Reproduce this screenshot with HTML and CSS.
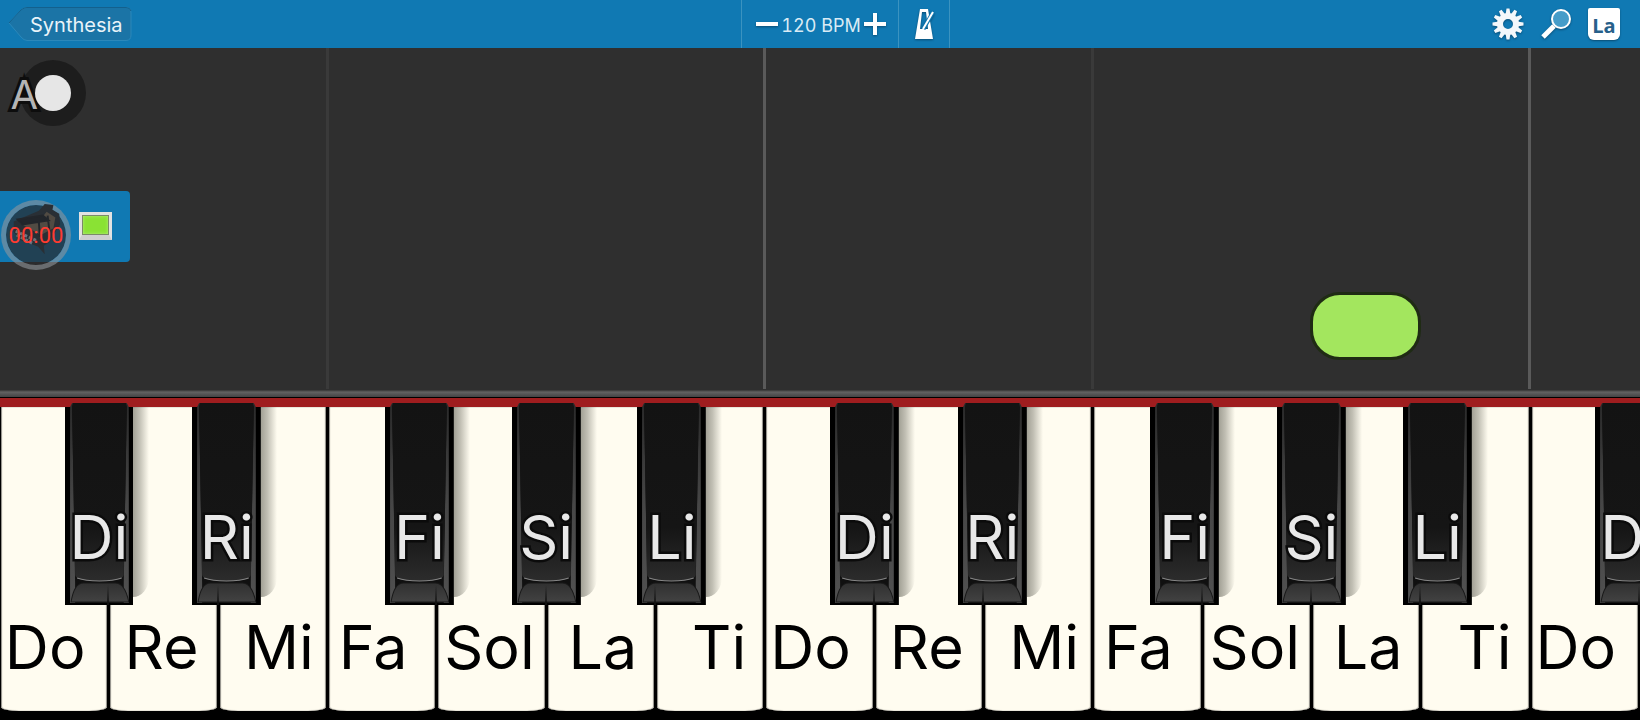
FILE: index.html
```html
<!DOCTYPE html>
<html lang="en">
<head>
  <meta charset="UTF-8">
  <meta name="viewport" content="width=device-width, initial-scale=1.0">
  <title>Synthesia</title>
  <link rel="stylesheet" href="styles.css">
</head>
<body>
  <header class="toolbar">
    <div class="toolbar-left">
      <button class="back">
        <svg class="back-shape" viewBox="0 0 124 34" aria-hidden="true">
          <path d="M1 16 L13 3 Q16 .5 19 .5 H118 Q123 .5 123 6 V28 Q123 33.500 118 33.500 H19 Q16 33.500 13 30 Z" fill="#1b74a6" stroke="#2b88ba"/>
          <path d="M1 16 L13 3 Q16 .5 19 .5 H118 Q122 .5 123 4" fill="none" stroke="#13608d"/>
        </svg>
        <span>Synthesia</span>
      </button>
    </div>
    <div class="tempo">
      <button class="step" aria-label="Slower">
        <svg width="22" height="22" viewBox="0 0 22 22"><path d="M0 11h22" stroke="#fff" stroke-width="4"/></svg>
      </button>
      <span class="bpm">120 BPM</span>
      <button class="step" aria-label="Faster">
        <svg width="22" height="22" viewBox="0 0 22 22"><path d="M0 11h22M11 0v22" stroke="#fff" stroke-width="4"/></svg>
      </button>
    </div>
    <div class="toolbar-right">
      <button class="metronome" aria-label="Metronome">
        <svg width="20" height="32" viewBox="0 0 20 32">
          <path fill="#fff" fill-rule="evenodd" d="M6 1h8l5 30H1zM8 4L6 21h8L12 4z"/>
          <path d="M9.500 21L19 4" stroke="#1078b2" stroke-width="4"/>
          <path d="M9 21L19 4" stroke="#fff" stroke-width="2"/>
        </svg>
      </button>
      <div class="tools">
        <button aria-label="Settings">
          <svg width="32" height="32" viewBox="-16 -16 32 32">
            <g id="teeth" fill="#f4f8fb"></g>
            <circle r="8" fill="none" stroke="#f4f8fb" stroke-width="6"/>
          </svg>
        </button>
        <button aria-label="Zoom">
          <svg width="32" height="32" viewBox="0 0 32 32">
            <path d="M3 29L14 18" stroke="#fff" stroke-width="5"/>
            <circle cx="21" cy="11" r="9" fill="#459cc9" stroke="#fff" stroke-width="2"/>
          </svg>
        </button>
        <button class="names" aria-label="Note names">La</button>
      </div>
    </div>
  </header>

  <main class="lanes">
    <div class="lane low"></div>
    <div class="lane low-octave"></div>
    <div class="lane high"></div>
    <div class="lane high-octave"></div>
    <div class="note"></div>

    <div class="touch"><span class="touch-letter">A</span><span class="touch-dot"></span></div>

    <div class="part">
      <button class="recorder">
        <svg class="piano" viewBox="0 0 62 62" aria-hidden="true">
          <path d="M8 17L34 6 40 -1 49 0 48 5 55 9 56 20 44 39 39 42 40 51 33 43 14 36 8 28z" fill="#292f35"/>
          <path d="M13 18L34 17 42 7 51 13 49 24 36 31z" fill="#514b43"/>
          <path d="M12 15L38 11 44 16 17 20zM34 18L35 33M43 11L45 28" fill="#22262b" stroke="#22262b" stroke-width="2"/>
          <path d="M10 27L32 37M11 31L28 40" stroke="#6b747d" stroke-width="3" stroke-dasharray="3 2"/>
        </svg>
        <span>00:00</span>
      </button>
      <button class="swatch" aria-label="Part colour"></button>
    </div>
  </main>

  <div class="rail"></div>
  <div class="felt"></div>
  <div class="keyboard" id="keyboard"></div>

  <script>
    const octave = [
      { name: "Do", align: "far-left", black: "Di" },
      { name: "Re", align: "left", black: "Ri" },
      { name: "Mi", align: "right" },
      { name: "Fa", align: "far-left", black: "Fi" },
      { name: "Sol", align: "left", black: "Si" },
      { name: "La", align: "near-right", black: "Li" },
      { name: "Ti", align: "far-right" }
    ];

    // black key: bevelled sides, top face and the sloped front
    const blackArt = `
      <svg class="black-art" viewBox="0 0 68 202" preserveAspectRatio="none" aria-hidden="true">
        <defs>
          <linearGradient id="side" x2="0" y2="1">
            <stop offset="0" stop-color="#2a2a2a"/><stop offset=".5" stop-color="#464646"/><stop offset="1" stop-color="#505050"/>
          </linearGradient>
          <linearGradient id="face" x2="0" y2="1">
            <stop offset="0" stop-color="#131313"/><stop offset=".7" stop-color="#151515"/><stop offset="1" stop-color="#2c2c2c"/>
          </linearGradient>
          <linearGradient id="front" x2="0" y2="1">
            <stop offset="0" stop-color="#303030"/><stop offset="1" stop-color="#424242"/>
          </linearGradient>
        </defs>
        <path d="M0 4H68V202H0z" fill="#000"/>
        <path d="M7 0H61L63 4V200H5V4z" fill="url(#side)"/>
        <path d="M8 0H60L61 4 58 180V200H10V180L7 4z" fill="#101010"/>
        <path d="M8 0H60L61 4 58 172Q57 178 34 178T10 172L7 4z" fill="url(#face)"/>
        <path d="M12 175Q20 178 34 178T56 175" fill="none" stroke="#858585"/>
        <path d="M6 199Q9 180 18 180H50Q59 180 63 199z" fill="url(#front)" stroke="#181818"/>
      </svg>`;

    const keyboard = document.getElementById("keyboard");
    for (let i = 0; i < 15; i++) {
      const note = octave[i % 7];
      const key = document.createElement("div");
      key.className = "key";
      key.innerHTML = `<button class="white ${note.align}">${note.name}</button>`;
      if (note.black) {
        key.classList.add("split");
        key.innerHTML += `<button class="black ${note.black.toLowerCase()}">${blackArt}<span>${note.black}</span></button>`;
      }
      keyboard.appendChild(key);
    }

    let teeth = "";
    for (let a = 0; a < 360; a += 30) {
      teeth += `<path d="M-2.500 -9L-1.500 -15.500H1.500L2.500 -9z" transform="rotate(${a})"/>`;
    }
    document.getElementById("teeth").innerHTML = teeth;
  </script>
</body>
</html>
```
FILE: styles.css
```css
* {
  box-sizing: border-box;
}
body {
  margin: 0;
  min-height: 100vh;
  display: flex;
  flex-direction: column;
  overflow: hidden;
  background: #000;
  font-family: Inter, "Liberation Sans", sans-serif;
}
button {
  margin: 0;
  padding: 0;
  border: none;
  background: none;
  color: inherit;
  font: inherit;
  cursor: pointer;
}
svg {
  display: block;
}

/* toolbar */
.toolbar {
  display: grid;
  grid-template-columns: 1fr auto 1fr;
  height: 48px;
  background: #1079b3;
  color: #fff;
}
.toolbar-left {
  display: flex;
  align-items: center;
  padding-left: 8px;
}
.back {
  position: relative;
  width: 124px;
  height: 34px;
  padding: 2px 0 0 22px;
  text-align: left;
  font-size: 20px;
  color: #e9f3f9;
}
.back-shape {
  position: absolute;
  inset: 0;
}
.back span {
  position: relative;
}
.tempo {
  display: flex;
  align-items: center;
  justify-content: space-between;
  width: 158px;
  padding: 0 12px 0 14px;
  border-left: 1px solid #3b93c0;
  border-right: 1px solid #3b93c0;
}
.step svg,
.metronome svg,
.tools svg {
  filter: drop-shadow(0 1px 1px #0a4c73);
}
.bpm {
  font-size: 18px;
  line-height: 24px;
  padding-top: 4px;
  color: #d9ebf5;
  font-variant-numeric: tabular-nums;
  white-space: nowrap;
}
.toolbar-right {
  display: flex;
  justify-content: space-between;
}
.metronome {
  display: flex;
  align-items: center;
  justify-content: center;
  width: 51px;
  border-right: 1px solid #3b93c0;
}
.tools {
  display: flex;
  align-items: center;
  gap: 16px;
  padding-right: 20px;
}
.names {
  width: 32px;
  height: 32px;
  padding-top: 3px;
  border-radius: 2px 2px 6px 6px;
  background: #fff;
  box-shadow: 0 1px 2px #0a4c73;
  color: #27608a;
  font: 700 20px/28px "Open Sans", sans-serif;
}

/* falling notes */
.lanes {
  position: relative;
  flex: 1;
  display: grid;
  grid-template-columns: repeat(15, 1fr);
  background: #2f2f2f;
}
.lane {
  grid-row: 1;
  margin: 0 -1px 1px 0;
  border-right: 3px solid #3a3a3a;
}
.lane.low {
  grid-column: 1 / 4;
}
.lane.low-octave {
  grid-column: 4 / 8;
  border-color: #5a5a5a;
}
.lane.high {
  grid-column: 8 / 11;
}
.lane.high-octave {
  grid-column: 11 / 15;
  margin-right: 0;
  border-color: #5a5a5a;
}
.note {
  grid-row: 1;
  grid-column: 13;
  align-self: end;
  height: 68px;
  margin: 0 0 30px -2px;
  border: 3px solid #1f2b14;
  border-radius: 30px;
  background: #a3e65e;
}

.touch {
  position: absolute;
  left: 20px;
  top: 12px;
  width: 66px;
  height: 66px;
  border-radius: 50%;
  background: #1d1d1d;
}
.touch-letter {
  position: absolute;
  right: 48px;
  top: 10px;
  font-size: 40px;
  line-height: 50px;
  color: #b4b4b4;
  -webkit-text-stroke: 6px #0d0d0d;
  stroke-linejoin: round;
  paint-order: stroke fill;
}
.touch-dot {
  position: absolute;
  left: 15px;
  top: 15px;
  width: 36px;
  height: 36px;
  border-radius: 50%;
  background: #e6e6e6;
}

.part {
  position: absolute;
  left: 0;
  top: 143px;
  width: 130px;
  height: 71px;
  border-radius: 0 4px 4px 0;
  background: #1079b3;
}
.recorder {
  position: absolute;
  left: 1px;
  top: 9px;
  width: 70px;
  height: 70px;
  border: 5px solid rgba(145, 150, 155, 0.6);
  border-radius: 50%;
  background: rgba(42, 42, 44, 0.7);
  background-clip: padding-box;
  font: 22px/62px Roboto, sans-serif;
  color: #ff3b30;
}
.piano {
  position: absolute;
  inset: 0;
  overflow: visible;
}
.recorder span {
  position: relative;
}
.swatch {
  position: absolute;
  left: 79px;
  top: 21px;
  width: 33px;
  height: 28px;
  border: 3px solid #e2e2e2;
  border-bottom: 5px solid #cfcfcf;
  background: #8ae234;
  box-shadow: inset 0 0 0 1px #7a8a68, inset 0 0 3px 1px #b5ec82;
}

/* keyboard */
.rail {
  height: 8px;
  border-bottom: 1px solid #000;
  background: linear-gradient(#343434, #626262 30%, #434345);
}
.felt {
  height: 9px;
  background: #9f1d1f;
}
.keyboard {
  display: grid;
  grid-template-columns: repeat(15, 1fr);
  height: 313px;
  padding-bottom: 9px;
  background: #000;
}
.key {
  position: relative;
  display: flex;
}
.white {
  flex: 1;
  display: flex;
  align-items: flex-end;
  justify-content: center;
  margin: 0 2px 0 1px;
  padding-bottom: 27px;
  border-radius: 0 0 18px 18px / 0 0 4px 4px;
  background: #fffcf0;
  box-shadow: inset 1px 0 1px #8d8b84, inset -1px 0 1px #8d8b84;
  font-size: 61px;
  line-height: 74px;
  color: #000;
}
.white.left {
  padding-right: 4px;
}
.white.far-left {
  padding-right: 18px;
}
.white.near-right {
  padding-left: 4px;
}
.white.right {
  padding-left: 12px;
}
.white.far-right {
  padding-left: 18px;
}
.black {
  position: absolute;
  z-index: 1;
  top: -4px;
  width: 63%;
  height: 202px;
  color: #e8e8e8;
  font-size: 61px;
  line-height: 74px;
}
.black.di { left: 59%; }
.black.ri { left: 76%; }
.black.fi { left: 52%; }
.black.si { left: 68%; }
.black.li { left: 83%; }
.black-art {
  position: absolute;
  inset: 0;
  width: 100%;
  height: 100%;
}
.black span {
  position: absolute;
  left: 0;
  right: 0;
  top: 97px;
  white-space: nowrap;
  -webkit-text-stroke: 5px #0b0b0b;
  paint-order: stroke fill;
}
/* shadow thrown on the next white key */
.black::after {
  content: "";
  position: absolute;
  left: 100%;
  top: 4px;
  width: 16px;
  height: 190px;
  background: linear-gradient(to right, rgba(50, 50, 40, 0.45), rgba(50, 50, 40, 0.3) 40%, transparent);
  border-bottom-right-radius: 16px 20px;
}
.split::after {
  content: "";
  position: absolute;
  z-index: 2;
  right: 0;
  top: 178px;
  width: 2px;
  height: 20px;
  background: linear-gradient(transparent, #111);
}
```
